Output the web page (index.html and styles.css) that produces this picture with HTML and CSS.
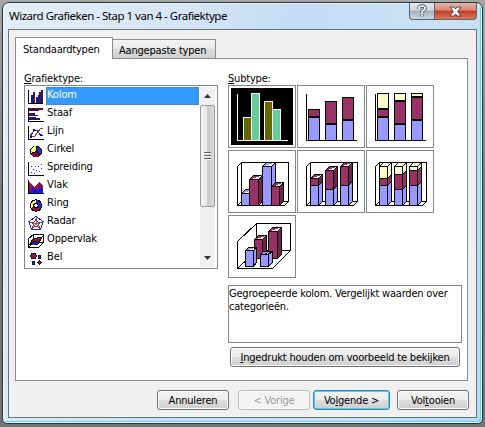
FILE: index.html
```html
<!DOCTYPE html>
<html lang="nl">
<head>
<meta charset="utf-8">
<title>Wizard Grafieken</title>
<link rel="stylesheet" href="styles.css">
</head>
<body>
<main class="window">
  <header class="titlebar">
    <h1 class="title">Wizard Grafieken - Stap 1 van 4 - Grafiektype</h1>
    <div class="controls">
      <button class="help" aria-label="Help"><svg width="12" height="14" viewBox="0 0 12 14"><path d="M3 5V4q0-2 3-2t3 2q0 2-3 3v2M6 10.500v2" fill="none" stroke="#4b5563" stroke-width="3.400"/><path d="M3 5V4q0-2 3-2t3 2q0 2-3 3v2M6 10.500v2" fill="none" stroke="#fff" stroke-width="1.700"/></svg></button>
      <button class="close" aria-label="Sluiten"><svg width="13" height="11" viewBox="0 0 13 11"><path d="M1 1h4l1.500 2L8 1h4L8.700 5.500 12 10H8L6.500 8 5 10H1l3.300-4.500z" fill="#fff" stroke="#5d4048"/></svg></button>
    </div>
  </header>
  <section class="client">
    <nav class="tabs">
      <div class="tab active"><span>Standaardtypen</span></div>
      <div class="tab"><span>Aangepaste typen</span></div>
    </nav>
    <div class="panel">
      <div class="left">
        <div class="label"><span><u>G</u>rafiektype:</span></div>
        <div class="listbox">
          <ul class="items">
            <li class="selected"><svg class="icon" viewBox="0 0 16 16"><path d="M.5 1v13.500H15" stroke="#000" fill="none"/><path d="M3 6h2v8H3zM8 8h2v6H8zM11 3h2v11h-2z" fill="#17179a"/><path d="M5 3h2v11H5zM10 6h1v8h-1zM13 1h2v13h-2z" fill="#4b1239"/></svg><span>Kolom</span></li>
            <li><svg class="icon" viewBox="0 0 16 16"><path d="M.5 1v13.500H16" stroke="#000" fill="none"/><path d="M1 1h14v2H1zM1 6h6v2H1zM1 10h7v1H1z" fill="#4b1239"/><path d="M1 3h10v1H1zM1 8h9v1H1zM1 11h11v2H1z" fill="#17177a"/></svg><span>Staaf</span></li>
            <li><svg class="icon" viewBox="0 0 16 16"><path d="M.5 1v13.500H16" stroke="#000" fill="none"/><path d="M2 12l4-7h3l4 6 2-1" stroke="#2929d0" fill="none"/><path d="M2 9l2 2h3l6-8h2" stroke="#a03050" fill="none"/><path d="M5 4h2v2H5zM12 9h2v2h-2zM2 11h2v2H2z" fill="#0000c0"/></svg><span>Lijn</span></li>
            <li><svg class="icon" viewBox="0 0 16 16"><circle cx="8" cy="8.500" r="5.500" fill="#2424d0" stroke="#000"/><path d="M8 8.500L12.500 12A5.500 5.500 0 0 1 3 10.500z" fill="#7b0d39"/><path d="M8 8.500L3 10.500A5.500 5.500 0 0 1 8 3z" fill="#ff6"/><path d="M8 8.500V3M8 8.500l-5 2M8 8.500l4.500 3.500" stroke="#000"/></svg><span>Cirkel</span></li>
            <li><svg class="icon" viewBox="0 0 16 16"><path d="M.5 1v13.500H16" stroke="#000" fill="none"/><path d="M3 11h1v1H3zM5 8h1v1H5zM8 9h1v1H8zM10 5h1v1h-1zM13 3h1v1h-1z" fill="#00c"/><path d="M3 5h1v1H3zM6 12h1v1H6zM7 5h1v1H7zM11 10h1v1h-1zM13 7h1v1h-1z" fill="#724"/></svg><span>Spreiding</span></li>
            <li><svg class="icon" viewBox="0 0 16 16"><path d="M1 2l5 6 5-5 4 4v7H1z" fill="#8b1748"/><path d="M1 13l5-4 3 2 3-3 3 3v3H1z" fill="#1515e6"/><path d="M.5 1v13.500H16" stroke="#000" fill="none"/></svg><span>Vlak</span></li>
            <li><svg class="icon" viewBox="0 0 16 16"><circle cx="8" cy="8.500" r="4" fill="#fff" stroke="#000" stroke-width="4.500"/><path d="M8 4.500a4 4 0 0 1 3 6.500" fill="none" stroke="#2525d8" stroke-width="2.500"/><path d="M11 11a4 4 0 0 1-6.500-.5" fill="none" stroke="#8b1748" stroke-width="2.500"/><path d="M4.500 10.500A4 4 0 0 1 8 4.500" fill="none" stroke="#ff6" stroke-width="2.500"/></svg><span>Ring</span></li>
            <li><svg class="icon" viewBox="0 0 16 16"><path d="M8 1.500l7 5-2.500 8h-9L1 6.500z" fill="#fff" stroke="#1d1dd0"/><path d="M8 2v7L2 7M8 9l6-2M8 9l-4 5M8 9l4 5" stroke="#334" fill="none" stroke-width=".7"/><path d="M8 4l1.500 3 3 .5-2 2 1 3L8 11l-3.500 1.500 1-3-2-2 3-.5z" stroke="#981b42" fill="none"/></svg><span>Radar</span></li>
            <li><svg class="icon" viewBox="0 0 16 16"><path d="M.5 5.500l5-4h10v8l-5 5H.5zM5.500 1.500v8l-5 5M5.500 9.500h10" fill="#fff" stroke="#000"/><path d="M2 11l3-5 4-1 5-1-3 6-5-1z" fill="#861644" stroke="#000"/><path d="M2 12l4-4 5 2-2 2-4-1z" fill="#1a1ac8" stroke="#000" stroke-width=".7"/></svg><span>Oppervlak</span></li>
            <li><svg class="icon" viewBox="0 0 16 16"><circle cx="5.500" cy="5" r="2.700" fill="#7b1942" stroke="#111"/><circle cx="11.500" cy="6" r="1.500" fill="#22d" stroke="#114"/><circle cx="5.500" cy="12" r="1.500" fill="#22d" stroke="#114"/><circle cx="11.500" cy="11.500" r="1.800" fill="#7b1942" stroke="#111"/></svg><span>Bel</span></li>
          </ul>
          <div class="scrollbar">
            <svg class="arrow" viewBox="0 0 7 4"><path d="M0 4l3.500-4L7 4z" fill="#333"/></svg>
            <div class="thumb"><i></i><i></i><i></i></div>
            <svg class="arrow down" viewBox="0 0 7 4"><path d="M0 0l3.500 4L7 0z" fill="#333"/></svg>
          </div>
        </div>
      </div>
      <div class="right">
        <div class="label"><span><u>S</u>ubtype:</span></div>
        <div class="grid">
          <svg class="cell" viewBox="0 0 68 63"><path d="M3 3h62v57H3z"/><g stroke="#fff"><path d="M9.500 9v46.500H60" fill="none"/><path class="olive" d="M15.500 32.500h8v23h-8zM36.500 16.500h8v39h-8z"/><path class="mint" d="M23.500 8.500h8v47h-8zM44.500 24.500h8v31h-8z"/></g></svg>
          <svg class="cell ink" viewBox="0 0 68 63"><path class="none" d="M9.500 9v46.500H60"/><path class="blue" d="M11.500 32.500h11v23h-11zM28.500 39.500h11v16h-11zM45.500 35.500h11v20h-11z"/><path class="plum" d="M11.500 24.500h11v7h-11zM28.500 16.500h11v22h-11zM45.500 12.500h11v22h-11z"/></svg>
          <svg class="cell ink" viewBox="0 0 68 63"><path class="none" d="M9.500 9v46.500H60"/><path class="blue" d="M11.500 32.500h11v23h-11zM28.500 39.500h11v16h-11zM45.500 35.500h11v20h-11z"/><path class="plum" d="M11.500 24.500h11v7h-11zM28.500 16.500h11v22h-11zM45.500 12.500h11v22h-11z"/><path class="cream" d="M11.500 8.500h11v15h-11zM28.500 8.500h11v7h-11zM45.500 8.500h11v3h-11z"/></svg>

          <svg class="cell ink" viewBox="0 0 68 63"><path class="none" d="M9.500 55.500v-39l4-4h47v39l-4 4zM13.500 12.500v39l-4 4M13.500 51.500h47"/><path class="blue" d="M13.500 43.500l4-4h8v12l-4 4h-8zh8l4-4m-4 4v12"/><path class="plum" d="M21.500 29.500l4-4h9v26l-4 4h-9zh9l4-4m-4 4v26"/><path class="blue" d="M34.500 16.500l4-4h9v39l-4 4h-9zh9l4-4m-4 4v39"/><path class="plum" d="M43.500 36.500l4-4h8v19l-4 4h-8zh8l4-4m-4 4v19"/><path class="shade" d="M31 29.500l3-3v25l-3 3zM52 36.500l3-3v18l-3 3z"/></svg>
          <svg class="cell ink" viewBox="0 0 68 63"><path class="none" d="M9.500 55.500v-39l4-4h47v39l-4 4zM13.500 12.500v39l-4 4M13.500 51.500h47"/><path class="plum" d="M13.500 28.500l4-4h8v7l-4 4h-8zh8l4-4m-4 4v7M28.500 20.500l4-4h8v19l-4 4h-8zh8l4-4m-4 4v19M43.500 16.500l4-4h8v19l-4 4h-8zh8l4-4m-4 4v19"/><path class="blue" d="M13.500 35.500h8l4-4v20l-4 4h-8zM21.500 35.500v20M28.500 39.500h8l4-4v16l-4 4h-8zM36.500 39.500v16M43.500 35.500h8l4-4v20l-4 4h-8zM51.500 35.500v20"/><path class="shade" d="M22 29l3-3v5l-3 3zM37 21l3-3v17l-3 3zM52 17l3-3v17l-3 3z"/></svg>
          <svg class="cell ink" viewBox="0 0 68 63"><path class="none" d="M9.500 55.500v-39l4-4h47v39l-4 4zM13.500 12.500v39l-4 4M13.500 51.500h47"/><path class="cream" d="M13.500 16.500l4-4h8v12l-4 4h-8zh8l4-4m-4 4v12M28.500 16.500l4-4h8v8l-4 4h-8zh8l4-4m-4 4v8M43.500 16.500l4-4h8v4l-4 4h-8zh8l4-4m-4 4v4"/><path class="plum" d="M13.500 28.500h8l4-4v7l-4 4h-8zM21.500 28.500v7M28.500 24.500h8l4-4v15l-4 4h-8zM36.500 24.500v15M43.500 20.500h8l4-4v15l-4 4h-8zM51.500 20.500v15"/><path class="blue" d="M13.500 35.500h8l4-4v20l-4 4h-8zM21.500 35.500v20M28.500 39.500h8l4-4v16l-4 4h-8zM36.500 39.500v16M43.500 35.500h8l4-4v20l-4 4h-8zM51.500 35.500v20"/></svg>

          <svg class="cell ink" viewBox="0 0 68 63"><path class="none" d="M9.500 53.500v-27l19-18h34v27l-18 18zM28.500 8.500v27l-19 18M28.500 35.500h34"/><path class="plum" d="M26.500 24.500l4-4h8v19l-4 4h-8zh8l4-4m-4 4v19M40.500 16.500l4-4h9v27l-4 4h-9zh9l4-4m-4 4v27"/><path class="shade" d="M35 25l3-3v17l-3 3zM50 17l3-3v25l-3 3z"/><path class="blue" d="M17.500 35.500l3-3h8v15l-3 4h-8zh8l3-3m-3 3v16M32.500 39.500l3-3h9v11l-4 4h-8zh8l4-3m-4 3v12"/></svg>
        </div>
        <p class="description">Gegroepeerde kolom. Vergelijkt waarden over<br>categorieën.</p>
        <button class="btn preview"><span><u>I</u>ngedrukt houden om voorbeeld te bekijken</span></button>
      </div>
    </div>
    <footer class="actions">
      <button class="btn cancel">Annuleren</button>
      <button class="btn back" disabled>&lt; Vorige</button>
      <button class="btn next"><span>Vo<u>l</u>gende &gt;</span></button>
      <button class="btn finish"><span>Vol<u>t</u>ooien</span></button>
    </footer>
  </section>
</main>
</body>
</html>
```
FILE: styles.css
```css
* { box-sizing: border-box; }
body {
  margin: 0;
  width: 485px;
  height: 427px;
  padding: 2px 2px 3px;
  overflow: hidden;
  background: linear-gradient(#a5a5a2, #77797b 45%, #747474);
  font: 11px/13px "DejaVu Sans Condensed", "DejaVu Sans", sans-serif;
  font-stretch: condensed;
  letter-spacing: -.2px;
  color: #000;
}
u { text-decoration-thickness: 1px; text-underline-offset: 1px; }
button { font: inherit; letter-spacing: inherit; color: inherit; padding: 0; }
span { white-space: nowrap; }

.window {
  display: flex;
  flex-direction: column;
  width: 481px;
  height: 422px;
  padding: 0 5px 5px;
  border: 1px solid #25363f;
  border-radius: 7px 7px 5px 5px;
  background: linear-gradient(105deg, #e3edf7, #d6e6f5 30%, #c3dcf3 50%, #cbe1f5 75%, #b5dbf5);
  box-shadow: inset 0 0 0 1px #e9f7ff, inset -2px -2px 0 #63d0ef;
}
.titlebar { display: flex; justify-content: space-between; height: 26px; }
.title {
  margin: 5px 0 0 1px;
  font: 11.5px/16px "Noto Sans", sans-serif;
  letter-spacing: -0.49px;
  white-space: nowrap;
}
.controls { display: flex; height: 17px; }
.controls button {
  display: flex;
  align-items: center;
  justify-content: center;
  border: 1px solid #5b646c;
  border-top: 0;
}
.help { width: 26px; border-radius: 0 0 0 4px; background: linear-gradient(#e5e9ed, #ced5dc 45%, #a5b0bb 50%, #cad4dd); }
.controls .close { width: 42px; border-left: 0; border-radius: 0 0 4px 0; background: linear-gradient(#e8b5aa, #d98475 45%, #c13a28 50%, #dc7a58); }

.client {
  flex: 1;
  width: 469px;
  padding: 7px 8px 0 6px;
  border: 1px solid #68737b;
  background: #f0f0f0;
}
.tabs { display: flex; align-items: flex-end; height: 21px; }
.tab {
  height: 19px;
  width: 103px;
  padding: 4px 0 0 6px;
  border: 1px solid #898c95;
  border-left: 0;
  border-bottom: 0;
  background: linear-gradient(#f2f2f2, #ebebeb 45%, #dcdcdc 50%, #d0d0d0);
}
.tab.active {
  position: relative;
  width: 98px;
  height: 22px;
  margin-bottom: -1px;
  padding: 5px 0 0 7px;
  border-left: 1px solid #898c95;
  background: #fff;
}
.panel {
  display: flex;
  gap: 10px;
  width: 453px;
  height: 323px;
  padding: 13px 0 0 8px;
  border: 1px solid #898c95;
  background: #fff;
}
.label { height: 13px; }
.left { width: 194px; }
.listbox {
  display: flex;
  justify-content: space-between;
  height: 184px;
  padding: 1px 2px 1px 1px;
  border: 1px solid #828790;
}
.items { width: 173px; margin: 0; padding: 0 0 0 2px; list-style: none; }
.items li { display: flex; height: 18px; }
.icon { width: 16px; height: 16px; margin: 2px 2px 0 0; shape-rendering: crispEdges; }
.items span { flex: 1; height: 18px; padding: 1px 0 0 1px; letter-spacing: -.12px; }
.items .selected span { background: #3399ff; color: #fff; border: 1px solid #4d87c2; padding: 0; }
.scrollbar {
  display: flex;
  flex-direction: column;
  width: 15px;
  background: #f0f0f0;
}
.arrow { width: 7px; height: 4px; margin: 7px 4px; }
.thumb {
  display: flex;
  flex-direction: column;
  align-items: center;
  justify-content: center;
  gap: 1px;
  height: 102px;
  border: 1px solid #999;
  border-radius: 2px;
  background: linear-gradient(90deg, #f4f4f4, #e4e4e4 45%, #c9c9c9 52%, #dedede);
}
.thumb i { width: 7px; height: 2px; background: #666; border-bottom: 1px solid #eee; }
.arrow.down { margin-top: auto; margin-bottom: 7px; }

.right { width: 234px; }
.grid { display: grid; grid-template-columns: repeat(3, 68px); gap: 2px 1px; }
.cell { display: block; width: 68px; height: 63px; box-shadow: inset 0 0 0 1px #828790; shape-rendering: crispEdges; }
.ink { stroke: #000; }
.none { fill: none; }
.olive { fill: #666600; }
.mint { fill: #66cc99; }
.blue { fill: #9999ff; }
.plum { fill: #993366; }
.cream { fill: #ffffcc; }
.shade { fill: #6d2449; stroke: none; }
.description {
  height: 58px;
  margin: 7px 0 0;
  padding: 1px 0 0;
  border: 1px solid #828790;
}
.btn {
  display: flex;
  align-items: center;
  justify-content: center;
  height: 20px;
  border: 1px solid #707070;
  border-radius: 3px;
  white-space: nowrap;
  background: linear-gradient(#f3f3f3, #ebebeb 48%, #dddddd 52%, #cfcfcf);
  box-shadow: inset 0 0 0 1px #fbfbfb;
}
.preview { width: 230px; margin: 4px 0 0 2px; }
.actions { display: flex; height: 20px; margin: 9px 0 0 142px; }
.actions .btn { width: 72px; flex: none; }
.actions .back { margin-left: 9px; color: #9a9a9a; border-color: #b8b8b8; background: #f4f4f4; }
.actions .next { width: 77px; margin-left: 3px; border-color: #3c7fb1; box-shadow: inset 0 0 0 1px #4ccdf0; }
.actions .finish { margin-left: 7px; }
```
